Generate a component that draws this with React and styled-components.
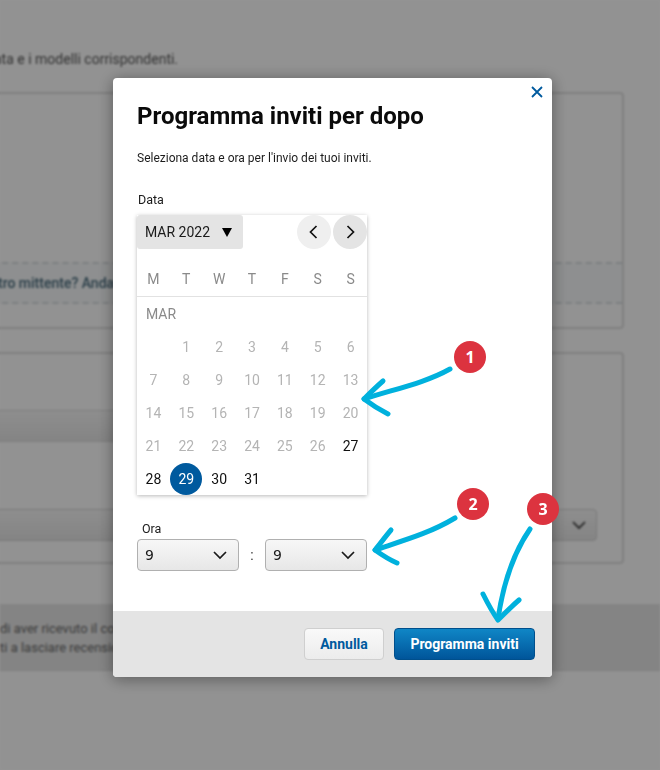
import styled, { createGlobalStyle } from "styled-components";

const GlobalStyle = createGlobalStyle`
  html, body {
    margin: 0;
    padding: 0;
    background: #fff;
    font-family: Roboto, "Liberation Sans", sans-serif;
  }
  * {
    box-sizing: border-box;
  }
`;

const weekdays = ["M", "T", "W", "T", "F", "S", "S"];
const days = [null];
for (let d = 1; d <= 31; d++) days.push(d);

const Chevron = ({ dir = "down", size = 16 }) => {
  const paths = {
    down: "M2 5l6 6 6-6",
    left: "M10.5 2L4.5 8l6 6",
    right: "M5.5 2l6 6-6 6",
  };
  return (
    <svg width={size} height={size} viewBox="0 0 16 16" fill="none">
      <path d={paths[dir]} stroke="currentColor" strokeWidth="1.7" />
    </svg>
  );
};

const Page = styled.div`
  position: relative;
  width: 660px;
  height: 770px;
  overflow: hidden;
`;

/* Page behind the dialog */
const Backdrop = styled.div`
  height: 770px;
  padding-top: 51px;
  background: #fcfcfc;
  filter: blur(1px);
  display: flex;
  flex-direction: column;
`;

const Intro = styled.p`
  margin: 0 0 24px -6px;
  font-size: 14px;
  line-height: 17px;
  color: #555;
  white-space: nowrap;
`;

const Panel = styled.div`
  width: 644px;
  height: ${(p) => p.$height}px;
  margin: 0 0 ${(p) => p.$gap}px -20px;
  padding-top: ${(p) => p.$top}px;
  border: 2px solid #dcdcdc;
  border-radius: 4px;
`;

const DashedNote = styled.div`
  height: 42px;
  padding-left: 16px;
  border-top: 2px dashed #d6dbde;
  border-bottom: 2px dashed #d6dbde;
  background: #f5f7f8;
  color: #45687a;
  font-size: 14px;
  font-weight: 500;
  line-height: 38px;
  white-space: nowrap;
`;

const GreyBand = styled.div`
  width: 520px;
  height: 32px;
  border: 1px solid #d8d8d8;
  background: linear-gradient(#f5f5f5, #e4e4e4);
`;

const BackSelect = styled.div`
  display: flex;
  justify-content: flex-end;
  align-items: center;
  width: 615px;
  height: 32px;
  margin-top: 67px;
  padding-right: 9px;
  border: 1px solid #d0d0d0;
  border-radius: 4px;
  background: linear-gradient(#f5f5f5, #e4e4e4);
  color: #333;
`;

const BackFooter = styled.div`
  height: 67px;
  padding-top: 15px;
  background: #e4e4e4;
  border-bottom: 1px solid #d8d8d8;
  color: #666;
  font-size: 13px;
  line-height: 19px;
  white-space: nowrap;
`;

const Scrim = styled.div`
  position: absolute;
  inset: 0;
  padding: 78px 0 0 113px;
  background: rgba(0, 0, 0, 0.42);
`;

const Modal = styled.div`
  display: flex;
  flex-direction: column;
  width: 439px;
  height: 599px;
  border-radius: 4px;
  overflow: hidden;
  background: #fff;
  box-shadow: 0 2px 16px rgba(0, 0, 0, 0.4);
`;

const ModalBody = styled.div`
  position: relative;
  flex: 1;
  padding: 24px 24px 0;
`;

const CloseButton = styled.button`
  position: absolute;
  top: 7px;
  right: 8px;
  display: flex;
  width: 14px;
  height: 14px;
  padding: 0;
  border: 0;
  background: none;
  color: #005a9e;
`;

const Title = styled.h1`
  margin: 0;
  font-size: 24px;
  line-height: 28px;
  font-weight: 700;
  color: #0a0a0a;
`;

const Subtitle = styled.p`
  margin: 20px 0 0;
  font-size: 12px;
  line-height: 16px;
  color: #1c1c1c;
`;

const FieldLabel = styled.div`
  margin: ${(p) => p.$top}px 0 ${(p) => p.$bottom}px ${(p) => p.$left || 1}px;
  font-size: 12.5px;
  line-height: 15px;
  color: #1c1c1c;
`;

const Calendar = styled.div`
  width: 230px;
  height: 280px;
  background: #fff;
  box-shadow: 0 1px 4px rgba(0, 0, 0, 0.28);
`;

const CalendarHeader = styled.div`
  display: flex;
  align-items: center;
  height: 34px;
`;

const MonthButton = styled.div`
  display: flex;
  align-items: center;
  gap: 12px;
  width: 106px;
  height: 34px;
  margin-right: auto;
  padding-left: 8px;
  border-radius: 3px;
  background: #e4e4e4;
  font-size: 14px;
  color: #1a1a1a;
`;

const Caret = styled.span`
  width: 0;
  height: 0;
  border-left: 5.5px solid transparent;
  border-right: 5.5px solid transparent;
  border-top: 9px solid #000;
`;

const NavButton = styled.div`
  display: flex;
  align-items: center;
  justify-content: center;
  width: 34px;
  height: 34px;
  margin-left: ${(p) => (p.$next ? 2 : 0)}px;
  border-radius: 50%;
  background: ${(p) => (p.$next ? "#e4e4e4" : "#efefef")};
  color: #111;
`;

const Weekdays = styled.div`
  display: grid;
  grid-template-columns: repeat(7, 32.86px);
  height: 48px;
  padding-top: 21px;
  border-bottom: 1px solid #e2e2e2;
  font-size: 14px;
  line-height: 18px;
  text-align: center;
  color: #8a8a8a;
`;

const MonthName = styled.div`
  height: 34px;
  padding: 9px 0 0 9px;
  font-size: 14px;
  line-height: 17px;
  color: #8a8a8a;
`;

const DayGrid = styled.div`
  display: grid;
  grid-template-columns: repeat(7, 32.86px);
  grid-auto-rows: 33px;
`;

const Day = styled.div`
  display: flex;
  align-items: center;
  justify-content: center;
  width: 32px;
  height: 32px;
  margin: 0 auto;
  border-radius: 50%;
  font-size: 14px;
  color: ${(p) => (p.$selected ? "#fff" : p.$enabled ? "#111" : "#b4b4b4")};
  background: ${(p) => (p.$selected ? "#005a9e" : "transparent")};
`;

const TimeRow = styled.div`
  display: flex;
  align-items: center;
`;

const TimeSelect = styled.div`
  display: flex;
  align-items: center;
  justify-content: space-between;
  width: 102px;
  height: 32px;
  padding: 0 10px 0 7px;
  border: 1px solid #b0b0b0;
  border-radius: 4px;
  background: linear-gradient(#f7f7f7, #e7e7e7);
  font-family: "DejaVu Sans", sans-serif;
  font-size: 14px;
  color: #1a1a1a;
`;

const Colon = styled.span`
  width: 26px;
  text-align: center;
  font-size: 14px;
  color: #333;
`;

const ModalFooter = styled.div`
  display: flex;
  justify-content: flex-end;
  align-items: center;
  gap: 10px;
  height: 66px;
  padding-right: 17px;
  background: #e4e4e4;
`;

const Button = styled.button`
  height: 32px;
  width: ${(p) => p.$width}px;
  padding: 0;
  border-radius: 4px;
  font-family: Roboto, sans-serif;
  font-size: 14px;
  font-weight: 700;
  border: 1px solid ${(p) => (p.$primary ? "#004f8c" : "#cfcfcf")};
  color: ${(p) => (p.$primary ? "#fff" : "#005a9e")};
  background: ${(p) =>
    p.$primary
      ? "linear-gradient(#0f86c6, #00559a)"
      : "linear-gradient(#f9f9f9, #ececec)"};
`;

/* Annotations drawn on top of the screenshot */
const Annotations = styled.svg`
  position: absolute;
  inset: 0;
  pointer-events: none;
`;

const Badge = styled.div`
  position: absolute;
  left: ${(p) => p.$x - 16}px;
  top: ${(p) => p.$y - 16}px;
  display: flex;
  align-items: center;
  justify-content: center;
  width: 32px;
  height: 32px;
  border-radius: 50%;
  background: #dc333f;
  color: #fff;
  font-family: "Open Sans", sans-serif;
  font-size: 16px;
  font-weight: 700;
`;

export default function App() {
  return (
    <Page>
      <GlobalStyle />
      <Backdrop>
        <Intro>ata e i modelli corrispondenti.</Intro>
        <Panel $height={237} $gap={23} $top={168}>
          <DashedNote>tro mittente? Andate</DashedNote>
        </Panel>
        <Panel $height={212} $gap={40} $top={56}>
          <GreyBand />
          <BackSelect>
            <Chevron />
          </BackSelect>
        </Panel>
        <BackFooter>
          di aver ricevuto il codice
          <br />
          ti a lasciare recensioni
        </BackFooter>
      </Backdrop>

      <Scrim>
        <Modal>
          <ModalBody>
            <CloseButton aria-label="Chiudi">
              <svg width="14" height="14" viewBox="0 0 14 14" fill="none">
                <path d="M2 2l10 10M12 2L2 12" stroke="currentColor" strokeWidth="1.8" />
              </svg>
            </CloseButton>
            <Title>Programma inviti per dopo</Title>
            <Subtitle>Seleziona data e ora per l'invio dei tuoi inviti.</Subtitle>
            <FieldLabel $top={26} $bottom={8}>
              Data
            </FieldLabel>
            <Calendar>
              <CalendarHeader>
                <MonthButton>
                  MAR 2022
                  <Caret />
                </MonthButton>
                <NavButton>
                  <Chevron dir="left" />
                </NavButton>
                <NavButton $next>
                  <Chevron dir="right" />
                </NavButton>
              </CalendarHeader>
              <Weekdays>
                {weekdays.map((w, i) => (
                  <span key={i}>{w}</span>
                ))}
              </Weekdays>
              <MonthName>MAR</MonthName>
              <DayGrid>
                {days.map((d, i) => (
                  <Day key={i} $enabled={d >= 27} $selected={d === 29}>
                    {d}
                  </Day>
                ))}
              </DayGrid>
            </Calendar>
            <FieldLabel $top={26} $bottom={3} $left={5}>
              Ora
            </FieldLabel>
            <TimeRow>
              <TimeSelect>
                9
                <Chevron />
              </TimeSelect>
              <Colon>:</Colon>
              <TimeSelect>
                9
                <Chevron />
              </TimeSelect>
            </TimeRow>
          </ModalBody>
          <ModalFooter>
            <Button $width={80}>Annulla</Button>
            <Button $primary $width={141}>
              Programma inviti
            </Button>
          </ModalFooter>
        </Modal>
      </Scrim>

      <Annotations width="660" height="770" viewBox="0 0 660 770" fill="none">
        <g stroke="#00b1dd" strokeWidth="5" strokeLinecap="round" strokeLinejoin="round">
          <path d="M450 369C425 383 395 389 364 399" />
          <path d="M383 381C375 388 369 394 364 399C372 405 380 410 388 414" />
          <path d="M455 518C430 533 405 540 375 550" />
          <path d="M391 530C385 537 380 544 375 550C382 555 390 560 397 563" />
          <path d="M530 529C512 555 503 585 498 619" />
          <path d="M483 594C488 604 493 613 498 620C505 613 512 606 519 600" />
        </g>
      </Annotations>
      <Badge $x={470} $y={357}>1</Badge>
      <Badge $x={473} $y={504}>2</Badge>
      <Badge $x={543} $y={509}>3</Badge>
    </Page>
  );
}
